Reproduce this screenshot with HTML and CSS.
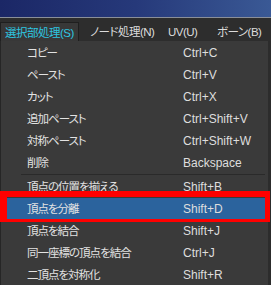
FILE: index.html
```html
<!DOCTYPE html>
<html lang="ja">
<head>
  <meta charset="UTF-8" />
  <title>選択部処理</title>
  <link rel="stylesheet" href="styles.css">
</head>
<body>
  <div class="titlebar"></div>

  <nav class="menubar">
    <span class="menu menu-s active">選択部処理(S)</span>
    <span class="menu menu-n">ノード処理(N)</span>
    <span class="menu menu-u">UV(U)</span>
    <span class="menu menu-b">ボーン(B)</span>
  </nav>

  <ul class="dropdown">
    <li class="item"><span class="label">コピー</span><span class="key">Ctrl+C</span></li>
    <li class="item"><span class="label">ペースト</span><span class="key">Ctrl+V</span></li>
    <li class="item"><span class="label">カット</span><span class="key">Ctrl+X</span></li>
    <li class="item"><span class="label">追加ペースト</span><span class="key">Ctrl+Shift+V</span></li>
    <li class="item"><span class="label">対称ペースト</span><span class="key">Ctrl+Shift+W</span></li>
    <li class="item"><span class="label">削除</span><span class="key">Backspace</span></li>
    <li class="separator"></li>
    <li class="item"><span class="label">頂点の位置を揃える</span><span class="key">Shift+B</span></li>
    <li class="item selected"><span class="label">頂点を分離</span><span class="key">Shift+D</span></li>
    <li class="item"><span class="label">頂点を結合</span><span class="key">Shift+J</span></li>
    <li class="item"><span class="label">同一座標の頂点を結合</span><span class="key">Ctrl+J</span></li>
    <li class="item"><span class="label">二頂点を対称化</span><span class="key">Shift+R</span></li>
  </ul>

  <!-- annotation around the highlighted command -->
  <div class="callout"></div>
</body>
</html>
```

FILE: styles.css
```css
body {
  margin: 0;
  background: #2c2c2c;
  font-family: "Liberation Sans", "Noto Sans CJK JP", sans-serif;
  font-size: 12px;
  color: #e2e2e2;
  position: relative;
  width: 271px;
  height: 285px;
  overflow: hidden;
}
.titlebar {
  height: 17px;
  background: linear-gradient(to right, #1b2766, #26397a 50%, #3a5995);
  border-bottom: 1px solid #8a8f99;
}
.menubar {
  display: flex;
  height: 23px;
  align-items: flex-end;
  background: #2d2d2d;
  font-size: 11.5px;
  letter-spacing: -0.5px;
  font-feature-settings: "palt";
}
.menu {
  box-sizing: border-box;
  height: 19px;
  line-height: 20px;
  white-space: nowrap;
  color: #dcdcdc;
}
.menu-s { width: 79px; padding-left: 4px; }
.menu-n { width: 84px; padding-left: 11px; }
.menu-u { width: 48px; padding-left: 5px; }
.menu-b { padding-left: 6px; }
.menu.active {
  background: #383838;
  border: 1px solid #1f1f1f;
  border-bottom: none;
  color: #2ec6e0;
}
.dropdown {
  list-style: none;
  margin: 0;
  padding: 1px 0 0;
  width: 267px;
  height: 250px;
  background: #3a3a3a;
  border-left: 1px solid #262626;
}
.item {
  display: flex;
  height: 22px;
  line-height: 23px;
  margin: 0 3px 0 6px;
  white-space: nowrap;
}
.label {
  width: 156px;
  padding-left: 20px;
  font-size: 11.5px;
  letter-spacing: -1px;
  font-feature-settings: "palt";
}
.key {
  color: #dedede;
}
.selected {
  background: #2b639d;
}
.separator {
  height: 1px;
  margin: 0 3px 1px 20px;
  background: #2a2a2a;
}
.callout {
  position: absolute;
  left: 0;
  top: 191px;
  width: 258px;
  height: 22px;
  border-style: solid;
  border-color: #ff0000;
  border-width: 6px 5px 3px 7px;
}
```
